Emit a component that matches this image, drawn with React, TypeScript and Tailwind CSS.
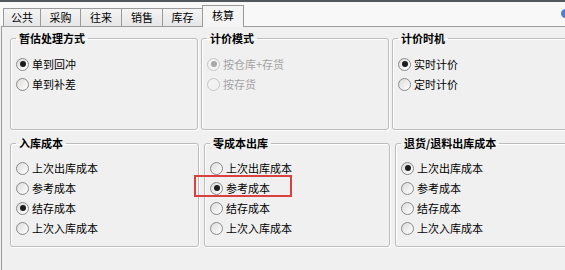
import React from "react";

type Opt = { label: string; checked?: boolean };

const tabs = [
    { label: "公共", w: "w-[38px]" },
    { label: "采购", w: "w-[41px]" },
    { label: "往来", w: "w-[42px]" },
    { label: "销售", w: "w-[42px]" },
    { label: "库存", w: "w-[41px]" },
];

function Radio({ label, checked, disabled }: Opt & { disabled?: boolean }) {
    return (
        <div className="flex h-[20px] items-center">
            <span
                className={`flex h-[13px] w-[13px] shrink-0 items-center justify-center rounded-full border ${
                    disabled
                        ? "border-[#c6c6c6] bg-[#f2f2f2]"
                        : "border-[#8a8a8a] bg-gradient-to-br from-[#dcdcdc] to-[#ffffff]"
                }`}
            >
                {checked && (
                    <span
                        className={`h-[6px] w-[6px] rounded-full ${
                            disabled ? "bg-[#a8a8a8]" : "bg-[#1c1c1c]"
                        }`}
                    />
                )}
            </span>
            <span className={`ml-[3px] whitespace-nowrap leading-none ${disabled ? "text-[#a3a3a3]" : "text-black"}`}>
                {label}
            </span>
        </div>
    );
}

function Group({
    title,
    options,
    width,
    height,
    top,
    disabled,
    children,
}: {
    title: string;
    options: Opt[];
    width: string;
    height: string;
    top: string;
    disabled?: boolean;
    children?: React.ReactNode;
}) {
    return (
        <fieldset
            className={`relative shrink-0 rounded-[3px] border border-[#bcbcbc] px-[5px] shadow-[inset_1px_1px_0_#ffffff,1px_1px_0_#ffffff] ${width} ${height} ${top}`}
        >
            <legend className="px-[3px] text-[11px] font-bold leading-[14px] text-black">{title}</legend>
            {options.map((o) => (
                <Radio key={o.label} {...o} disabled={disabled} />
            ))}
            {children}
        </fieldset>
    );
}

const costOpts = ["上次出库成本", "参考成本", "结存成本", "上次入库成本"];

export default function App() {
    return (
        <div className="flex h-[270px] w-[565px] flex-col overflow-hidden bg-[#f0f0f0] font-['Noto_Sans_CJK_SC',sans-serif] text-[11px] text-black">
            <div className="h-[2px] bg-[#52575e]" />

            {/* ── Tab strip ─────────────────────────────── */}
            <div className="relative flex h-[24px] items-end bg-[#f8f8f8] pl-[3px]">
                {tabs.map((t, i) => (
                    <div
                        key={t.label}
                        className={`flex h-[18px] items-center justify-center border border-b-0 border-[#9a9a9a] bg-gradient-to-b from-[#f4f4f4] to-[#e6e6e6] ${t.w} ${
                            i > 0 ? "-ml-px" : ""
                        }`}
                    >
                        {t.label}
                    </div>
                ))}
                <div className="relative z-10 -mb-px -ml-px flex h-[22px] w-[42px] items-center justify-center border border-b-0 border-[#9a9a9a] bg-[#f5f5f5] pb-[2px]">
                    核算
                </div>
                <div className="absolute right-[-5px] top-[7px] h-[9px] w-[9px] rounded-full bg-[#4f7fcf]" />
            </div>

            {/* ── Panel ─────────────────────────────────── */}
            <div className="ml-[1px] flex flex-1 flex-col gap-[6px] border-l border-t border-[#9c9c9c] pl-[8px] pt-[4px]">
                <div className="flex gap-[3px]">
                    <Group
                        title="暂估处理方式"
                        width="w-[188px]"
                        height="h-[99px]"
                        top="pt-[9px]"
                        options={[{ label: "单到回冲", checked: true }, { label: "单到补差" }]}
                    />
                    <Group
                        title="计价模式"
                        width="w-[188px]"
                        height="h-[99px]"
                        top="pt-[9px]"
                        disabled
                        options={[{ label: "按仓库+存货", checked: true }, { label: "按存货" }]}
                    />
                    <Group
                        title="计价时机"
                        width="w-[200px]"
                        height="h-[99px]"
                        top="pt-[9px]"
                        options={[{ label: "实时计价", checked: true }, { label: "定时计价" }]}
                    />
                </div>

                <div className="flex gap-[5px]">
                    <Group
                        title="入库成本"
                        width="w-[189px]"
                        height="h-[111px]"
                        top="pt-[8px]"
                        options={costOpts.map((l) => ({ label: l, checked: l === "结存成本" }))}
                    />
                    <Group
                        title="零成本出库"
                        width="w-[186px]"
                        height="h-[111px]"
                        top="pt-[8px]"
                        options={costOpts.map((l) => ({ label: l, checked: l === "参考成本" }))}
                    >
                        {/* Highlight */}
                        <div className="absolute left-[-11px] top-[25px] h-[22px] w-[98px] border-2 border-[#d8413f]" />
                    </Group>
                    <Group
                        title="退货/退料出库成本"
                        width="w-[200px]"
                        height="h-[111px]"
                        top="pt-[8px]"
                        options={costOpts.map((l) => ({ label: l, checked: l === "上次出库成本" }))}
                    />
                </div>
            </div>
        </div>
    );
}
